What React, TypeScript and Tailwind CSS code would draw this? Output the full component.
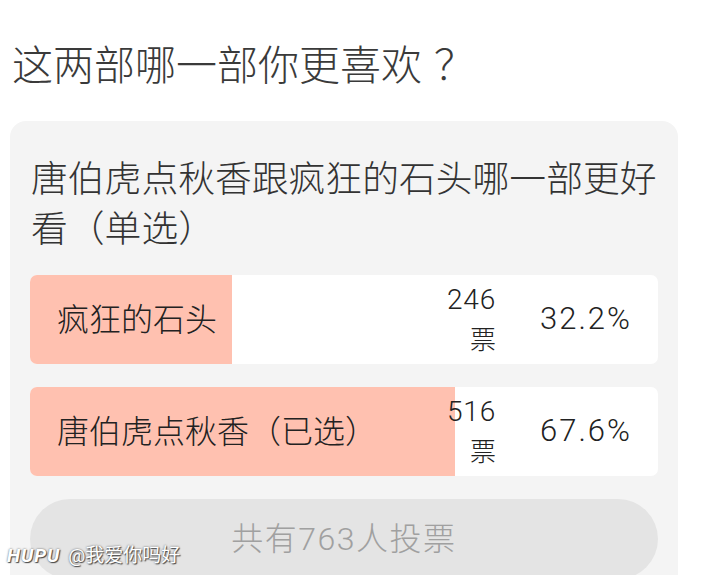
import React from 'react';

const options = [
  { label: '疯狂的石头', votes: 246, pct: 32.2 },
  { label: '唐伯虎点秋香（已选）', votes: 516, pct: 67.6 },
];

const font = { fontFamily: 'Roboto, "Noto Sans CJK SC", sans-serif' };

export default function App() {
  return (
    <div className="relative h-[575px] overflow-hidden bg-white font-light" style={font}>
      <h1 className="pl-[12px] pt-[42px] text-[41px] leading-[48px] text-[#3a3a3a]">
        这两部哪一部你更喜欢<span className="ml-[12px]">？</span>
      </h1>

      <div className="mx-[10px] mt-[31px] w-[668px] rounded-[16px] bg-[#f4f4f4] px-[20px] pt-[34px] pb-[40px]">
        <p className="pl-[1px] text-[36.8px] leading-[50px] text-[#333333]">
          唐伯虎点秋香跟疯狂的石头哪一部更好看（单选）
        </p>

        <div className="mt-[20px] flex flex-col gap-[23px]">
          {options.map((o) => (
            <div key={o.label} className="relative h-[89px] overflow-hidden rounded-[7px] bg-white">
              <div className="absolute inset-y-0 left-0 bg-[#ffc1b0]" style={{ width: `${o.pct}%` }} />
              <div className="relative flex h-full items-center pl-[27px] pr-[28px] text-[#222222]">
                <span className="flex-1 text-[32px]">{o.label}</span>
                <div className="mr-[4px] flex flex-col items-end leading-[40px]">
                  <span className="text-[28px] tracking-[0.8px]">{o.votes}</span>
                  <span className="text-[26px]">票</span>
                </div>
                <span className="w-[132px] text-right text-[31px] tracking-[2px] -mr-[2px]">{o.pct}%</span>
              </div>
            </div>
          ))}
        </div>

        <div className="mt-[23px] flex h-[80px] items-center justify-center rounded-full bg-[#e4e4e4] text-[32px] tracking-[1.5px] text-[#a0a0a0]">
          共有763人投票
        </div>
      </div>

      <div className="absolute bottom-[5px] left-[7px] flex items-center gap-[8px] text-[19px] text-white [text-shadow:0_0_2px_#555,1px_1px_1px_#444]">
        <span className="font-bold italic tracking-[1px]">HUPU</span>
        <span className="font-normal">@我爱你吗好</span>
      </div>
    </div>
  );
}
